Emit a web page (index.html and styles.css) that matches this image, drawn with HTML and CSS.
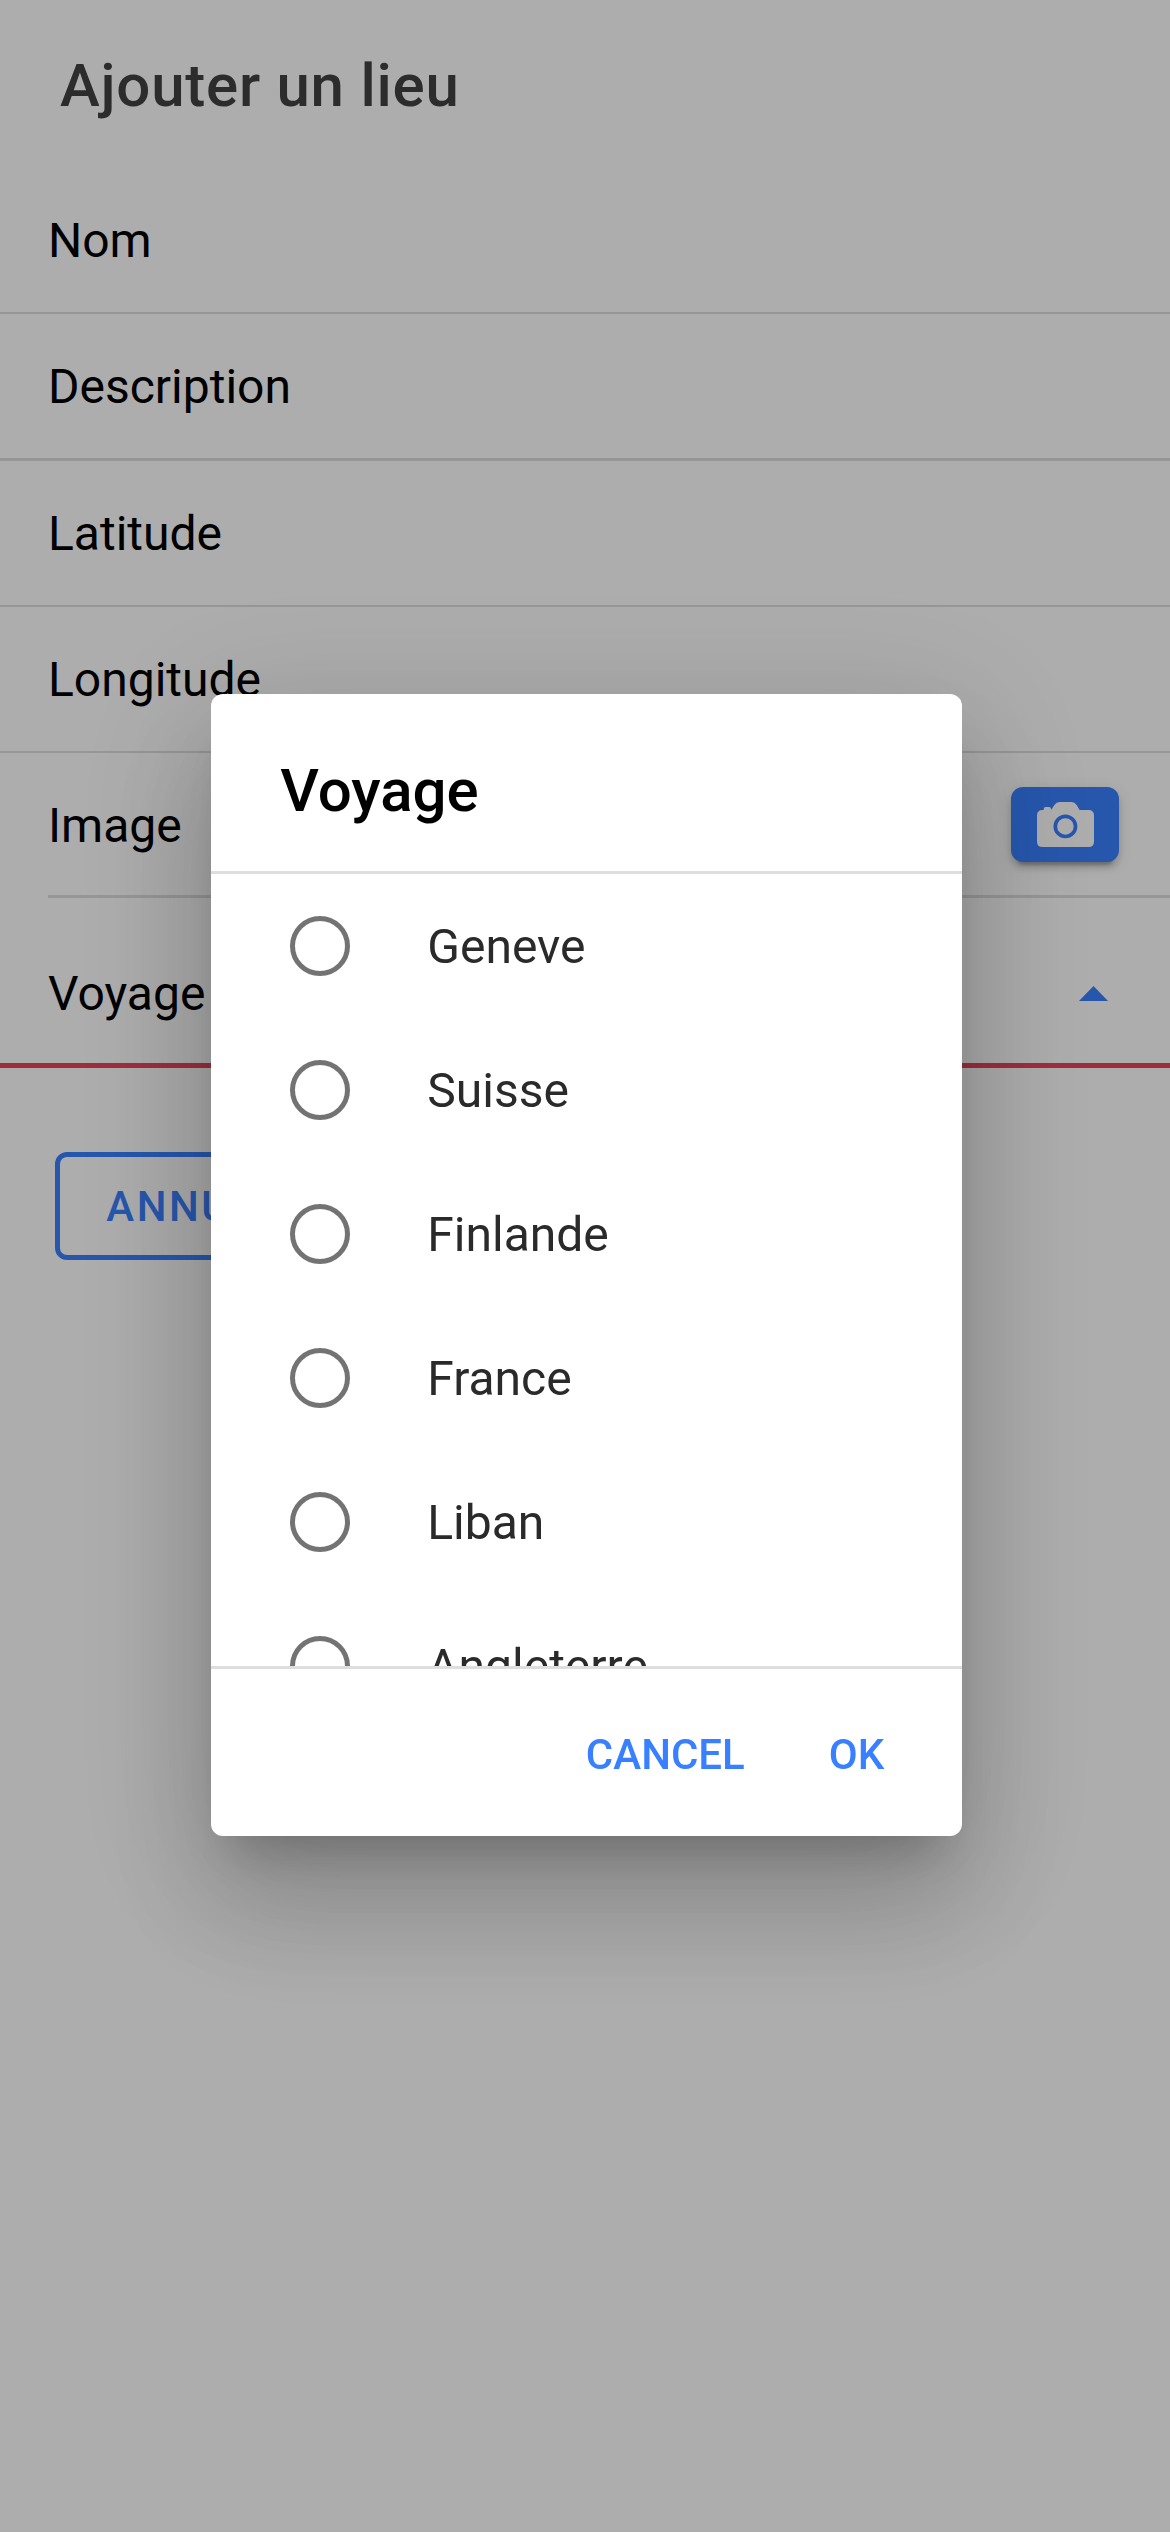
FILE: index.html
```html
<!DOCTYPE html>
<html lang="fr">
<head>
<meta charset="utf-8">
<title>Ajouter un lieu</title>
<link rel="stylesheet" href="styles.css">
</head>
<body>
<main class="page">
  <header class="toolbar"><h1 class="toolbar-title">Ajouter un lieu</h1></header>
  <form class="form">
    <div class="item"><label class="label">Nom</label></div>
    <div class="item item-thick"><label class="label">Description</label></div>
    <div class="item"><label class="label">Latitude</label></div>
    <div class="item"><label class="label">Longitude</label></div>
    <div class="item item-image">
      <label class="label">Image</label>
      <button class="camera" type="button" aria-label="Photo">
        <svg class="camera-icon" viewBox="0 0 57 45">
          <path fill="#fff" d="M5.5 8H6.7V7Q6.7 5 8.7 5H12Q14.1 5 14.1 7V8L17.4 3Q19.3 0 22.5 0H34.5Q37.7 0 39.6 3L42.6 8H51.5Q57 8 57 13.5V39.5Q57 45 51.5 45H5.5Q0 45 0 39.5V13.5Q0 8 5.5 8Z"/>
          <circle cx="28.4" cy="24.4" r="10.1" fill="none" stroke="#3880ff" stroke-width="3.7"/>
        </svg>
      </button>
    </div>
    <div class="item item-select">
      <label class="label">Voyage</label>
      <svg class="arrow" viewBox="0 0 29 15"><path fill="#3880ff" d="M0 15L14.5 0L29 15Z"/></svg>
    </div>
    <div class="actions"><button class="outline" type="button">ANNULER</button></div>
  </form>
</main>
<div class="backdrop">
  <section class="alert" role="dialog">
    <h2 class="alert-title">Voyage</h2>
    <div class="options">
      <div class="option"><span class="radio"></span><span>Geneve</span></div>
      <div class="option"><span class="radio"></span><span>Suisse</span></div>
      <div class="option"><span class="radio"></span><span>Finlande</span></div>
      <div class="option"><span class="radio"></span><span>France</span></div>
      <div class="option"><span class="radio"></span><span>Liban</span></div>
      <div class="option"><span class="radio"></span><span>Angleterre</span></div>
    </div>
    <footer class="alert-buttons"><button class="text-button" type="button">CANCEL</button><button class="text-button" type="button">OK</button></footer>
  </section>
</div>
</body>
</html>
```
FILE: styles.css
```css
* { box-sizing: border-box; }
body { margin: 0; background: #fff; font-family: Roboto, sans-serif; color: #000; }
button { margin: 0; border: 0; background: none; font-family: inherit; }
.page { height: 2532px; overflow: hidden; }
.toolbar { height: 168px; padding: 1px 60px 0; }
.toolbar-title { margin: 0; font-size: 60px; line-height: 170px; font-weight: 500; letter-spacing: 0.75px; color: #424242; }
.item { display: flex; align-items: center; justify-content: space-between; height: 146px; padding: 2px 0 0 48px; border-bottom: 2px solid #dedede; }
.item-thick { height: 147px; border-bottom-width: 3px; }
.label { font-size: 48px; line-height: 56px; }
.item-image { height: 145px; margin-left: 48px; padding: 4px 51px 0 0; border-bottom-width: 3px; }
.item-image .label { margin-left: 0; }
.camera { display: flex; align-items: center; justify-content: center; width: 108px; height: 75px; margin-top: -3px; padding: 0; border-radius: 12px; background: #3880ff; box-shadow: 0 9px 3px -6px rgba(0,0,0,.2), 0 6px 6px 0 rgba(0,0,0,.14), 0 3px 15px 0 rgba(0,0,0,.12); }
.camera-icon { width: 57px; height: 45px; }
.item-select { height: 170px; padding: 26px 62px 0 48px; border-bottom: 5px solid #eb445a; }
.arrow { width: 29px; height: 15px; }
.actions { padding: 84px 55px 0; }
.outline { display: block; width: 308px; height: 108px; padding: 0; border: 5px solid #3880ff; border-radius: 12px; color: #3880ff; font-size: 42px; font-weight: 500; line-height: 100px; letter-spacing: 2.52px; text-align: center; }
.backdrop { position: fixed; inset: 0; display: flex; align-items: flex-start; justify-content: center; padding: 693.5px 0 0 3.5px; background: rgba(0,0,0,.32); }
.alert { width: 751px; height: 1142.5px; overflow: hidden; border-radius: 12px; background: #fff; box-shadow: 0 33px 45px -21px rgba(0,0,0,.2), 0 72px 114px 9px rgba(0,0,0,.14), 0 27px 138px 24px rgba(0,0,0,.12); }
.alert-title { height: 177.5px; margin: 0; padding: 62px 69px 0; font-size: 60px; line-height: 70px; font-weight: 500; }
.options { height: 798px; overflow: hidden; border-top: 3px solid #dedede; border-bottom: 3px solid #dedede; }
.option { display: flex; align-items: center; gap: 77px; height: 144px; padding-left: 79px; color: #2a2a2a; font-size: 48px; }
.radio { width: 60px; height: 60px; border: 5px solid #737373; border-radius: 50%; }
.alert-buttons { display: flex; justify-content: flex-end; padding: 61px 78px 0 0; gap: 84px; }
.text-button { padding: 0; color: #3880ff; font-size: 42px; line-height: 50px; font-weight: 500; }
```
